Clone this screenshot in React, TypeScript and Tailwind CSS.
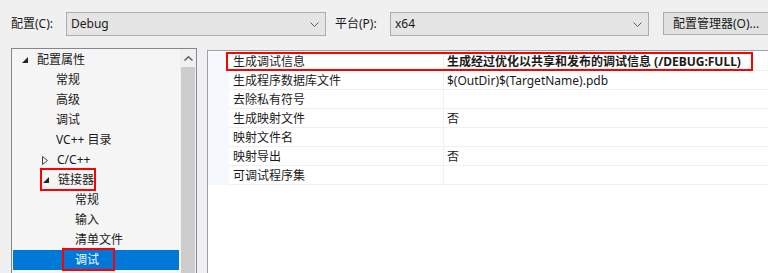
const font = "font-['Segoe_UI','Noto_Sans','Noto_Sans_CJK_SC',sans-serif]";

const Chevron = () => (
  <svg width="9" height="5" viewBox="0 0 9 5" className="shrink-0">
    <polyline points="0.5,0.5 4.5,4.5 8.5,0.5" fill="none" stroke="#606060" strokeWidth="1" />
  </svg>
);

const Expanded = () => (
  <svg width="6" height="6" viewBox="0 0 6 6" className="shrink-0">
    <polygon points="6,0 6,6 0,6" fill="#262626" />
  </svg>
);

const Collapsed = () => (
  <svg width="6" height="9" viewBox="0 0 6 9" className="shrink-0">
    <polygon points="0.5,0.5 5.5,4.5 0.5,8.5" fill="none" stroke="#404040" strokeWidth="1" />
  </svg>
);

type TreeRow = { label: string; pad: number; arrow?: "open" | "closed"; mark?: boolean; selected?: boolean };

const tree: TreeRow[] = [
  { label: "配置属性", pad: 10, arrow: "open" },
  { label: "常规", pad: 44 },
  { label: "高级", pad: 44 },
  { label: "调试", pad: 44 },
  { label: "VC++ 目录", pad: 44 },
  { label: "C/C++", pad: 30, arrow: "closed" },
  { label: "链接器", pad: 31, arrow: "open", mark: true },
  { label: "常规", pad: 63 },
  { label: "输入", pad: 63 },
  { label: "清单文件", pad: 63 },
  { label: "调试", pad: 63, selected: true, mark: true },
];

const props: [string, string][] = [
  ["生成调试信息", "生成经过优化以共享和发布的调试信息 (/DEBUG:FULL)"],
  ["生成程序数据库文件", "$(OutDir)$(TargetName).pdb"],
  ["去除私有符号", ""],
  ["生成映射文件", "否"],
  ["映射文件名", ""],
  ["映射导出", "否"],
  ["可调试程序集", ""],
];

const Dropdown = ({ value, width }: { value: string; width: string }) => (
  <div className={`${width} h-[24px] shrink-0 flex items-center justify-between border border-[#adadad] bg-[#e5e5e5] pl-[4px] pr-[6px]`}>
    <span>{value}</span>
    <Chevron />
  </div>
);

export default function App() {
  return (
    <div className={`w-[768px] h-[273px] overflow-hidden bg-[#f0f0f0] text-[12px] text-[#1a1a1a] ${font}`}>
      <div className="h-[48px] pt-[12px] flex items-start whitespace-nowrap">
        <span className="ml-[11px] w-[55px] shrink-0 leading-[24px]">配置(C):</span>
        <Dropdown value="Debug" width="w-[260px]" />
        <span className="ml-[9px] w-[55px] shrink-0 leading-[24px]">平台(P):</span>
        <Dropdown value="x64" width="w-[259px]" />
        <div className="ml-[14px] w-[120px] h-[23px] shrink-0 flex items-center border border-[#adadad] bg-[#e1e1e1] pl-[9px]">
          配置管理器(O)...
        </div>
      </div>

      <div className="flex items-start pl-[11px]">
        <div className="w-[186px] h-[240px] shrink-0 flex border border-[#828790] border-r-[#7f8da3] bg-[#f5f5f5]">
          <div className="flex-1 pt-px px-px">
            {tree.map((r, i) => (
              <div
                key={i}
                className={`relative h-[20px] flex items-center whitespace-nowrap ${r.selected ? "bg-[#0078d7] text-white" : ""}`}
                style={{ paddingLeft: r.pad - 1 }}
              >
                {r.arrow && (
                  <span className="w-[15px] flex items-center">{r.arrow === "open" ? <Expanded /> : <Collapsed />}</span>
                )}
                <span>{r.label}</span>
                {r.mark && (
                  <span
                    className="absolute top-[-2px] h-[23px] border-2 border-[#ff0000]"
                    style={r.arrow ? { left: 27, width: 56 } : { left: 49, width: 53 }}
                  />
                )}
              </div>
            ))}
          </div>
          <div className="w-[16px] flex flex-col bg-[#f0f0f0]">
            <div className="h-[18px] flex items-center justify-center">
              <svg width="9" height="5" viewBox="0 0 9 5">
                <polyline points="0.5,4.5 4.5,0.8 8.5,4.5" fill="none" stroke="#606060" strokeWidth="1.5" />
              </svg>
            </div>
            <div className="flex-1 mx-px bg-[#cdcdcd]" />
          </div>
        </div>

        <div className="ml-[10px] mt-[2px] flex-1 h-[240px] border-l border-t border-[#a0a0a0] bg-white pt-[1px]">
          {props.map(([name, value], i) => (
            <div key={i} className="relative h-[19px] flex whitespace-nowrap">
              <div className="w-[21px] shrink-0 bg-[#f5f8fd]" />
              <div className="w-[215px] shrink-0 pl-[4px] pt-[2px] leading-[16px] border-b border-r border-[#edf0f5]">{name}</div>
              <div className={`flex-1 pl-[3px] pt-[2px] leading-[16px] border-b border-[#edf0f5] ${i === 0 ? "font-bold" : ""}`}>{value}</div>
              {i === 0 && <span className="absolute left-[18px] right-[15px] top-0 h-[19px] border-2 border-[#ff0000]" />}
            </div>
          ))}
        </div>
      </div>
    </div>
  );
}
